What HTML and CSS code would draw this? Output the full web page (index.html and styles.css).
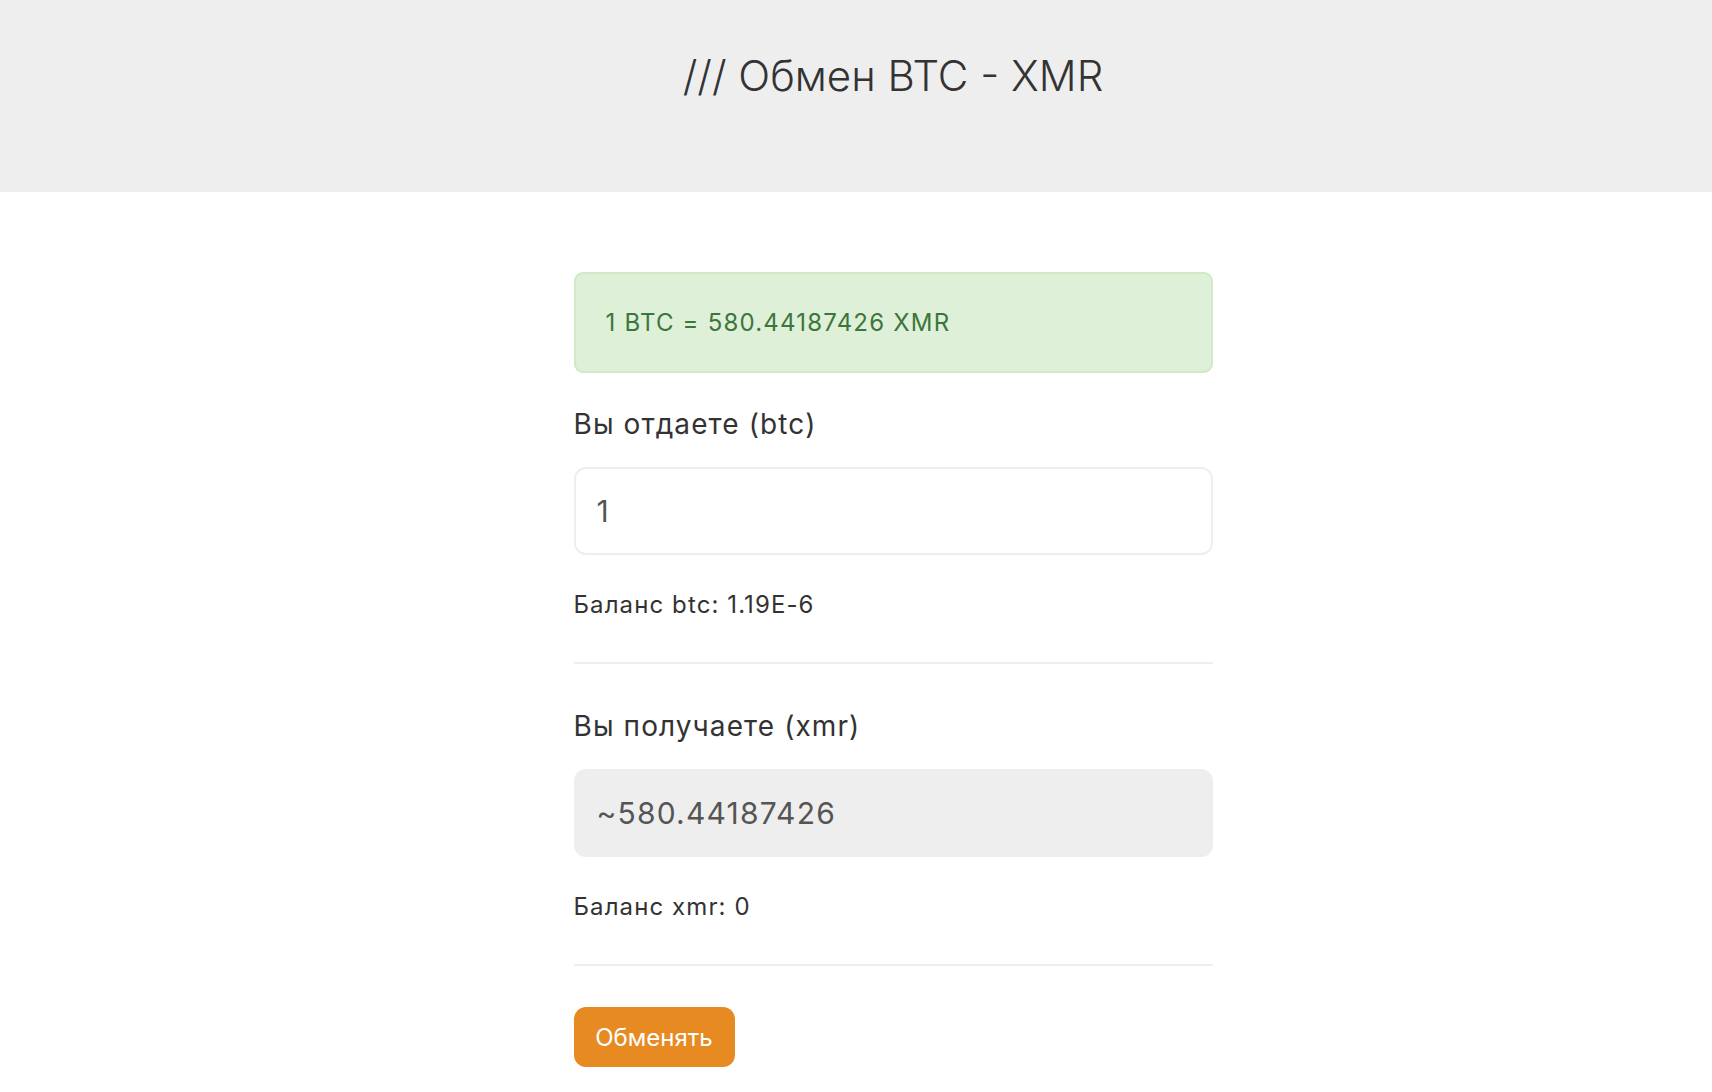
FILE: index.html
```html
<!DOCTYPE html>
<html>
<head>
  <title>Обмен BTC - XMR</title>
  <meta charset="UTF-8" />
  <meta name="viewport" content="width=device-width, initial-scale=1.0" />
  <link rel="stylesheet" href="styles.css">
</head>
<body>

  <!-- Page header -->
  <div class="header">
    <h1 class="title">/// Обмен BTC - XMR</h1>
  </div>

  <div class="main">
    <div class="container">
      <!-- Current rate -->
      <div class="alert">1 BTC = 580.44187426 XMR</div>

      <!-- What the user gives -->
      <label class="field-label" for="giveInput">Вы отдаете (btc)</label>
      <input type="text" id="giveInput" class="field" value="1">
      <p class="balance">Баланс btc: 1.19E-6</p>
      <hr class="divider">

      <!-- What the user gets -->
      <label class="field-label" for="getInput">Вы получаете (xmr)</label>
      <input type="text" id="getInput" class="field field-readonly" value="~580.44187426" readonly>
      <p class="balance">Баланс xmr: 0</p>
      <hr class="divider">

      <button class="btn-exchange">Обменять</button>
    </div>
  </div>

</body>
</html>
```

FILE: styles.css
```css
/* Base font */
body {
  margin: 0;
  font-family: Inter, "Noto Sans", sans-serif;
  color: #333;
  background: #fff;
}

/* Grey header with the title */
.header {
  background: #eeeeee;
  height: 192px;
  padding-left: 74px;
  box-sizing: border-box;
}

.title {
  margin: 0;
  padding-top: 50px;
  text-align: center;
  font-size: 42px;
  font-weight: 300;
  line-height: 52px;
  color: #333;
}

.main {
  padding-left: 74px;
}

.container {
  width: 639px;
  margin: 0 auto;
  padding-top: 80px;
}

/* Rate box */
.alert {
  background: #dff0d8;
  border: 2px solid #d0e9c6;
  border-radius: 9px;
  color: #3c763d;
  font-size: 24px;
  letter-spacing: 1.2px;
  height: 101px;
  box-sizing: border-box;
  display: flex;
  align-items: center;
  padding-left: 30px;
}

/* Labels above the inputs */
.field-label {
  display: block;
  margin-top: 34px;
  font-size: 28px;
  line-height: 34px;
  letter-spacing: 1.1px;
  color: #333;
}

/* Amount inputs */
.field {
  display: block;
  width: 100%;
  height: 88px;
  box-sizing: border-box;
  margin-top: 26px;
  padding: 0 21px;
  border: 2px solid #eeeeee;
  border-radius: 12px;
  font-family: Inter, "Noto Sans", sans-serif;
  font-size: 30px;
  letter-spacing: 1.2px;
  color: #555;
  background: #fff;
  outline: none;
}

.field-readonly {
  background: #eeeeee;
  border-color: #eeeeee;
}

/* Balance under each input */
.balance {
  margin: 35px 0 0;
  font-size: 24px;
  line-height: 30px;
  letter-spacing: 1.1px;
  color: #333;
}

.divider {
  margin: 42px 0 0;
  border: 0;
  border-top: 2px solid #eeeeee;
}

.divider + .field-label {
  margin-top: 45px;
}

/* Exchange button */
.btn-exchange {
  display: block;
  margin-top: 41px;
  width: 161px;
  height: 60px;
  border: 0;
  border-radius: 12px;
  background: #e78a22;
  color: #fff;
  font-family: Inter, "Noto Sans", sans-serif;
  font-size: 24px;
}
```
